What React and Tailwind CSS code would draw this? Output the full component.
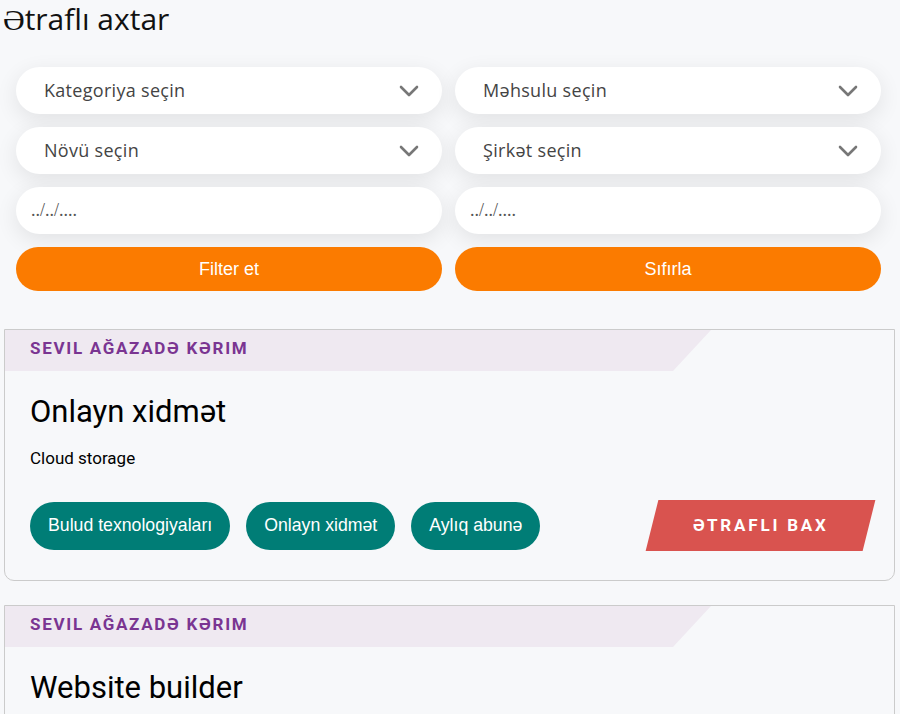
import React from 'react'

const CARDS = [
  {
    author: 'Sevil Ağazadə Kərim',
    title: 'Onlayn xidmət',
    sub: 'Cloud storage',
    tags: ['Bulud texnologiyaları', 'Onlayn xidmət', 'Aylıq abunə'],
  },
  {
    author: 'Sevil Ağazadə Kərim',
    title: 'Website builder',
    sub: 'Site constructor',
    tags: ['Veb', 'Onlayn xidmət'],
  },
]

function Chevron() {
  return (
    <svg width="20" height="12" viewBox="0 0 20 12" fill="none">
      <polyline points="2,2 10,10 18,2" stroke="#777" strokeWidth="2.6" strokeLinecap="round" strokeLinejoin="round" />
    </svg>
  )
}

function SelectBox({ label }) {
  return (
    <div className="h-[47px] rounded-full bg-white shadow-[0_6px_22px_rgba(0,0,0,0.09)] flex items-center justify-between pl-[28px] pr-[23px]">
      <span className="font-['Open_Sans'] text-[18px] tracking-[0.3px] text-[#444]">{label}</span>
      <Chevron />
    </div>
  )
}

function DateBox() {
  return (
    <input
      type="text"
      placeholder="../../...."
      className="h-[47px] w-full rounded-full bg-white shadow-[0_6px_22px_rgba(0,0,0,0.09)] pl-[15px] font-['Liberation_Serif'] text-[18px] text-[#444] placeholder:text-[#555] outline-none"
    />
  )
}

function Card({ card }) {
  return (
    <div className="ml-[4px] mr-[5px] border border-[#cbcbcb] rounded-b-[10px] bg-[#f7f8fa] pb-[29px]">
      <div className="h-[41px] w-[706px] bg-[#efe9f1] [clip-path:polygon(0_0,100%_0,calc(100%-38px)_100%,0_100%)] flex items-center pl-[25px] pb-[3px]">
        <span className="font-['Roboto'] font-bold text-[17px] tracking-[1.7px] uppercase text-[#7a3592]">{card.author}</span>
      </div>
      <div className="px-[25px]">
        <h2 className="mt-[23px] font-['Roboto'] text-[31px] leading-[36px] text-black">{card.title}</h2>
        <p className="mt-[16px] font-['Roboto'] text-[17px] leading-[24px] text-black">{card.sub}</p>
        <div className="mt-[30px] flex items-center justify-between">
          <div className="flex gap-[16px]">
            {card.tags.map((t) => (
              <span
                key={t}
                className="h-[48px] px-[18px] rounded-full bg-[#007d76] text-white font-['Liberation_Sans'] text-[17.7px] flex items-center"
              >
                {t}
              </span>
            ))}
          </div>
          <button className="h-[51px] w-[217px] bg-[#d9534f] -skew-x-[14deg] flex items-center justify-center">
            <span className="skew-x-[14deg] font-['Roboto'] font-bold text-[17px] tracking-[2.8px] text-white">ƏTRAFLI BAX</span>
          </button>
        </div>
      </div>
    </div>
  )
}

export default function App() {
  return (
    <div className="min-h-screen bg-[#f7f8fa] overflow-hidden">
      <h1 className="pl-[3px] font-['Open_Sans'] text-[30px] leading-[38px] text-[#111]">Ətraflı axtar</h1>

      <div className="mt-[29px] pl-[16px] pr-[19px] grid grid-cols-2 gap-x-[13px] gap-y-[13px]">
        <SelectBox label="Kategoriya seçin" />
        <SelectBox label="Məhsulu seçin" />
        <SelectBox label="Növü seçin" />
        <SelectBox label="Şirkət seçin" />
        <DateBox />
        <DateBox />
        <button className="h-[44px] rounded-full bg-[#fb7b00] text-white font-['Liberation_Sans'] text-[18px]">Filter et</button>
        <button className="h-[44px] rounded-full bg-[#fb7b00] text-white font-['Liberation_Sans'] text-[18px]">Sıfırla</button>
      </div>

      <div className="mt-[38px] flex flex-col gap-[24px]">
        {CARDS.map((c, i) => (
          <Card key={i} card={c} />
        ))}
      </div>
    </div>
  )
}
